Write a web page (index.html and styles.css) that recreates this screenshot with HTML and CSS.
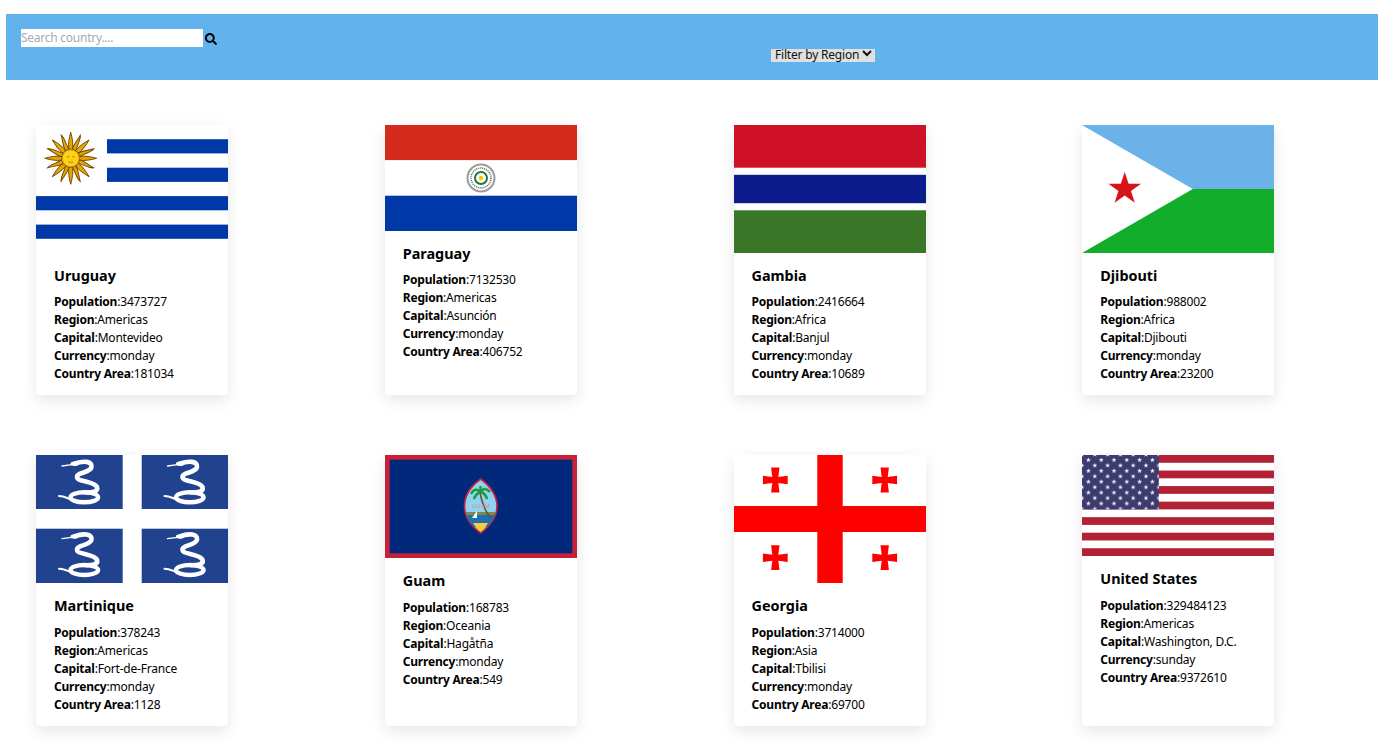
FILE: index.html
```html
<!DOCTYPE html>
<html lang="en">

<head>
    <meta charset="UTF-8">
    <meta name="viewport" content="width=device-width, initial-scale=1.0">
    <title>Countries</title>
    <link rel="stylesheet" href="styles.css">
</head>

<body>
    <header class="top-bar">
        <div class="search-box">
            <input class="search-input" type="text" placeholder="Search country....">
            <svg class="search-icon" viewBox="0 0 512 512" width="12" height="12">
                <path d="M505 442.7L405.3 343c-4.5-4.5-10.6-7-17-7H372c27.6-35.3 44-79.7 44-128C416 93.1 322.9 0 208 0S0 93.1 0 208s93.1 208 208 208c48.3 0 92.7-16.4 128-44v16.3c0 6.4 2.5 12.5 7 17l99.7 99.7c9.4 9.4 24.6 9.4 33.9 0l28.3-28.3c9.4-9.4 9.4-24.6.1-34zM208 336c-70.7 0-128-57.2-128-128 0-70.7 57.2-128 128-128 70.7 0 128 57.2 128 128 0 70.7-57.2 128-128 128z" />
            </svg>
        </div>
        <div class="filter-box">
            <select class="region-filter">
                <option>Filter by Region</option>
                <option>Africa</option>
                <option>Americas</option>
                <option>Asia</option>
                <option>Europe</option>
                <option>Oceania</option>
            </select>
        </div>
    </header>

    <!-- shared shapes for the flags -->
    <svg class="defs" width="0" height="0">
        <defs>
            <polygon id="star" points="0,-2.6 0.6,-0.8 2.5,-0.8 1,0.3 1.5,2.1 0,1 -1.5,2.1 -1,0.3 -2.5,-0.8 -0.6,-0.8" fill="#fff" />
            <pattern id="stars" width="12.8" height="10.88" patternUnits="userSpaceOnUse">
                <use href="#star" x="6.4" y="5" />
                <use href="#star" x="0" y="10.4" />
                <use href="#star" x="12.8" y="10.4" />
                <use href="#star" x="0" y="-0.48" />
                <use href="#star" x="12.8" y="-0.48" />
            </pattern>
            <g id="snake" fill="none" stroke="#fff" stroke-linecap="round">
                <path d="M26 11 L36 9.6" stroke-width="1.3" />
                <ellipse cx="38.5" cy="8.8" rx="4" ry="2.2" fill="#fff" stroke="none" />
                <path d="M39 8.5 C47 5.500 56.500 6 55.500 12 C54.500 18 41 17 41 22 C41 27 58 26 61 32 C62.500 37 56 37.500 50 37.500" stroke-width="4.600" />
                <ellipse cx="48.300" cy="42.300" rx="13.800" ry="5" stroke-width="4.400" />
                <path d="M23 41 C27 41 30 42.500 34 44" stroke-width="2" />
            </g>
            <path id="small-cross" d="M-4.2 -12.4 H4.2 L3 -3 L12.4 -4.2 V4.2 L3 3 L4.2 12.4 H-4.2 L-3 3 L-12.4 4.2 V-4.2 L-3 -3 Z" fill="#f00" />
            <g id="sun-rays">
                <path d="M0 -26 C1.6 -20 2.6 -15 2 -9 H-2 C-2.6 -15 -1.6 -20 0 -26 Z" />
                <path transform="rotate(22.5)" d="M0 -25 C2.6 -21 0.4 -16 2 -9 H-2 C-2.8 -15 -0.4 -19 0 -25 Z" />
            </g>
        </defs>
    </svg>

    <main class="country-grid">
        <article class="country-card">
            <svg class="flag" viewBox="0 0 192 128">
                <rect width="192" height="128" fill="#fff" />
                <g fill="#0038a8">
                    <rect x="71" y="14.2" width="121" height="14.2" />
                    <rect x="71" y="42.7" width="121" height="14.2" />
                    <rect y="71.1" width="192" height="14.2" />
                    <rect y="99.6" width="192" height="14.2" />
                </g>
                <g class="soft" transform="translate(34.7 33.3)" fill="#e3a600" stroke="#6f4305" stroke-width="0.9">
                    <use href="#sun-rays" />
                    <use href="#sun-rays" transform="rotate(45)" />
                    <use href="#sun-rays" transform="rotate(90)" />
                    <use href="#sun-rays" transform="rotate(135)" />
                    <use href="#sun-rays" transform="rotate(180)" />
                    <use href="#sun-rays" transform="rotate(225)" />
                    <use href="#sun-rays" transform="rotate(270)" />
                    <use href="#sun-rays" transform="rotate(315)" />
                    <circle r="8.5" fill="#fcd116" stroke="#c98a00" />
                    <path d="M-4 -1.5 H-1.5 M1.5 -1.5 H4 M-2.5 3.5 Q0 5 2.5 3.5" fill="none" stroke="#a86f00" stroke-width="0.8" />
                </g>
            </svg>
            <div class="card-body">
                <h3 class="country-name">Uruguay</h3>
                <p class="fact"><b>Population</b>:3473727</p>
                <p class="fact"><b>Region</b>:Americas</p>
                <p class="fact"><b>Capital</b>:Montevideo</p>
                <p class="fact"><b>Currency</b>:monday</p>
                <p class="fact"><b>Country Area</b>:181034</p>
            </div>
        </article>

        <article class="country-card">
            <svg class="flag" viewBox="0 0 192 106">
                <rect width="192" height="35.3" fill="#d52b1e" />
                <rect y="35.3" width="192" height="35.4" fill="#fff" />
                <rect y="70.7" width="192" height="35.3" fill="#0038a8" />
                <g class="soft">
                    <circle cx="96" cy="53" r="13.5" fill="#fff" stroke="#9b9b9b" stroke-width="2" />
                    <circle cx="96" cy="53" r="10" fill="none" stroke="#555" stroke-width="1.4" stroke-dasharray="1 1" />
                    <circle cx="96" cy="53" r="6" fill="none" stroke="#1b7a3a" stroke-width="2" />
                    <circle cx="96" cy="53" r="2.2" fill="#f5c800" />
                </g>
            </svg>
            <div class="card-body">
                <h3 class="country-name">Paraguay</h3>
                <p class="fact"><b>Population</b>:7132530</p>
                <p class="fact"><b>Region</b>:Americas</p>
                <p class="fact"><b>Capital</b>:Asunción</p>
                <p class="fact"><b>Currency</b>:monday</p>
                <p class="fact"><b>Country Area</b>:406752</p>
            </div>
        </article>

        <article class="country-card">
            <svg class="flag" viewBox="0 0 192 128">
                <rect width="192" height="128" fill="#fff" />
                <rect width="192" height="42.7" fill="#ce1126" />
                <rect y="49.8" width="192" height="28.4" fill="#0c1c8c" />
                <rect y="85.3" width="192" height="42.7" fill="#3a7728" />
            </svg>
            <div class="card-body">
                <h3 class="country-name">Gambia</h3>
                <p class="fact"><b>Population</b>:2416664</p>
                <p class="fact"><b>Region</b>:Africa</p>
                <p class="fact"><b>Capital</b>:Banjul</p>
                <p class="fact"><b>Currency</b>:monday</p>
                <p class="fact"><b>Country Area</b>:10689</p>
            </div>
        </article>

        <article class="country-card">
            <svg class="flag" viewBox="0 0 192 128">
                <rect width="192" height="64" fill="#6ab2e7" />
                <rect y="64" width="192" height="64" fill="#12ad2b" />
                <polygon points="0,0 110.8,64 0,128" fill="#fff" />
                <polygon points="42.7,47 46.6,58.7 59,58.7 49,66 52.8,77.8 42.7,70.5 32.6,77.8 36.4,66 26.4,58.7 38.8,58.7" fill="#d7141a" />
            </svg>
            <div class="card-body">
                <h3 class="country-name">Djibouti</h3>
                <p class="fact"><b>Population</b>:988002</p>
                <p class="fact"><b>Region</b>:Africa</p>
                <p class="fact"><b>Capital</b>:Djibouti</p>
                <p class="fact"><b>Currency</b>:monday</p>
                <p class="fact"><b>Country Area</b>:23200</p>
            </div>
        </article>

        <article class="country-card">
            <svg class="flag" viewBox="0 0 192 128">
                <rect width="192" height="128" fill="#fff" />
                <g fill="#21428f">
                    <rect width="86.7" height="54" />
                    <rect x="105.7" width="86.3" height="54" />
                    <rect y="73.7" width="86.7" height="54.3" />
                    <rect x="105.7" y="73.7" width="86.3" height="54.3" />
                </g>
                <g class="soft">
                    <use href="#snake" />
                    <use href="#snake" x="105.5" />
                    <use href="#snake" y="72.7" />
                    <use href="#snake" x="105.5" y="72.7" />
                </g>
            </svg>
            <div class="card-body">
                <h3 class="country-name">Martinique</h3>
                <p class="fact"><b>Population</b>:378243</p>
                <p class="fact"><b>Region</b>:Americas</p>
                <p class="fact"><b>Capital</b>:Fort-de-France</p>
                <p class="fact"><b>Currency</b>:monday</p>
                <p class="fact"><b>Country Area</b>:1128</p>
            </div>
        </article>

        <article class="country-card">
            <svg class="flag" viewBox="0 0 192 103">
                <rect width="192" height="103" fill="#c62139" />
                <rect x="4.7" y="4.7" width="182.6" height="93.6" fill="#00297b" />
                <g class="soft">
                    <path d="M95.7 24 C105 31 112 41 112 51 C112 61 105 71 95.7 78 C86 71 79.5 61 79.5 51 C79.5 41 86 31 95.7 24 Z" fill="#8fd3f0" stroke="#c62139" stroke-width="1.6" />
                    <path d="M81 57 H110.500 L110 60 H81.500 Z" fill="#7f8a4a" />
                    <path d="M81.500 60 H110 C108.500 65 105 69 102 72 H89 C86 69 83.500 65 81.500 60 Z" fill="#1f6fb5" />
                    <path d="M88 68 H103 C101 72 98 75 95.700 77 C93 75 90.500 72 88 68 Z" fill="#f4cf3a" />
                    <path d="M95 38 C97 47 100 57 106 63" fill="none" stroke="#7a4a1e" stroke-width="1.5" />
                    <path d="M95.500 37 C91 33 88 35 86 39 M95.500 37 C92 38 90 41 89 44 M95.500 37 C99 32 102 34 105 37 M95.500 37 C99 38 101 40 102 44 M95.500 37 V31" fill="none" stroke="#1c9a3c" stroke-width="2.400" />
                    <polygon points="92,56 92,63 87,63" fill="#fff" />
                    <text class="seal-text" x="95.700" y="53" text-anchor="middle">GUAM</text>
                </g>
            </svg>
            <div class="card-body">
                <h3 class="country-name">Guam</h3>
                <p class="fact"><b>Population</b>:168783</p>
                <p class="fact"><b>Region</b>:Oceania</p>
                <p class="fact"><b>Capital</b>:Hagåtña</p>
                <p class="fact"><b>Currency</b>:monday</p>
                <p class="fact"><b>Country Area</b>:549</p>
            </div>
        </article>

        <article class="country-card">
            <svg class="flag" viewBox="0 0 192 128">
                <rect width="192" height="128" fill="#fff" />
                <rect x="83.300" width="25.400" height="128" fill="#f00" />
                <rect y="51" width="192" height="26" fill="#f00" />
                <g class="soft">
                    <use href="#small-cross" x="41.300" y="25" />
                    <use href="#small-cross" x="150.700" y="25" />
                    <use href="#small-cross" x="41.300" y="102.700" />
                    <use href="#small-cross" x="150.700" y="102.700" />
                </g>
            </svg>
            <div class="card-body">
                <h3 class="country-name">Georgia</h3>
                <p class="fact"><b>Population</b>:3714000</p>
                <p class="fact"><b>Region</b>:Asia</p>
                <p class="fact"><b>Capital</b>:Tbilisi</p>
                <p class="fact"><b>Currency</b>:monday</p>
                <p class="fact"><b>Country Area</b>:69700</p>
            </div>
        </article>

        <article class="country-card">
            <svg class="flag" viewBox="0 0 192 101">
                <rect width="192" height="101" fill="#fff" />
                <g fill="#b22234">
                    <rect width="192" height="7.770" />
                    <rect y="15.540" width="192" height="7.770" />
                    <rect y="31.080" width="192" height="7.770" />
                    <rect y="46.620" width="192" height="7.770" />
                    <rect y="62.150" width="192" height="7.770" />
                    <rect y="77.690" width="192" height="7.770" />
                    <rect y="93.230" width="192" height="7.770" />
                </g>
                <rect width="76.800" height="54.400" fill="#3c3b6e" />
                <rect class="soft" width="76.800" height="54.400" fill="url(#stars)" />
            </svg>
            <div class="card-body">
                <h3 class="country-name">United States</h3>
                <p class="fact"><b>Population</b>:329484123</p>
                <p class="fact"><b>Region</b>:Americas</p>
                <p class="fact"><b>Capital</b>:Washington, D.C.</p>
                <p class="fact"><b>Currency</b>:sunday</p>
                <p class="fact"><b>Country Area</b>:9372610</p>
            </div>
        </article>
    </main>
</body>

</html>
```

FILE: styles.css
```css
/* Basic page styling */
body {
    margin: 14px 0 0 6px;
    font-family: "Noto Sans", sans-serif;
    color: #000;
    background-color: #fff;
}

.top-bar {
    display: flex;
    height: 66px;
    padding: 15px 0 0 15px;
    box-sizing: border-box;
    background-color: #62b2ed;
}

.search-box {
    display: flex;
    align-items: center;
    height: 18px;
}

.search-input {
    width: 182px;
    height: 18px;
    padding: 0 0 2px;
    border: none;
    box-sizing: border-box;
    font-family: inherit;
    font-size: 12px;
    letter-spacing: -0.25px;
    background-color: #fff;
}

.search-input::placeholder {
    color: #a6a9b8;
}

.search-icon {
    margin: 2px 0 0 2px;
}

/* the select is taller than the grey strip, so the strip clips it */
.filter-box {
    width: 104px;
    height: 13px;
    margin: 20px 0 0 554px;
    overflow: hidden;
    background-color: #e0e0e0;
}

.region-filter {
    display: block;
    width: 104px;
    height: 17px;
    margin-top: -4px;
    padding: 0;
    border: none;
    font-family: inherit;
    font-size: 12px;
    letter-spacing: -0.2px;
    color: #111;
    background-color: transparent;
}

.defs {
    display: block;
    height: 0;
}

/* Country cards */
.country-grid {
    display: grid;
    grid-template-columns: repeat(4, 192px);
    column-gap: 156.75px;
    row-gap: 60px;
    padding: 45px 0 25px 30px;
}

.country-card {
    border-radius: 0 0 4px 4px;
    background-color: #fff;
    box-shadow: 0 5px 15px rgba(0, 0, 0, 0.1);
}

.flag {
    display: block;
    width: 100%;
}

.soft {
    filter: blur(0.4px);
}

.card-body {
    padding: 14px 18px 12.2px;
}

.country-name {
    margin: 0 0 8.2px;
    font-size: 14.4px;
    line-height: 18px;
    font-weight: 700;
}

.fact {
    margin: 0;
    font-size: 12px;
    line-height: 18px;
    letter-spacing: -0.2px;
}

.seal-text {
    font-family: "Noto Sans", sans-serif;
    font-size: 6px;
    fill: #e58a96;
}
```
